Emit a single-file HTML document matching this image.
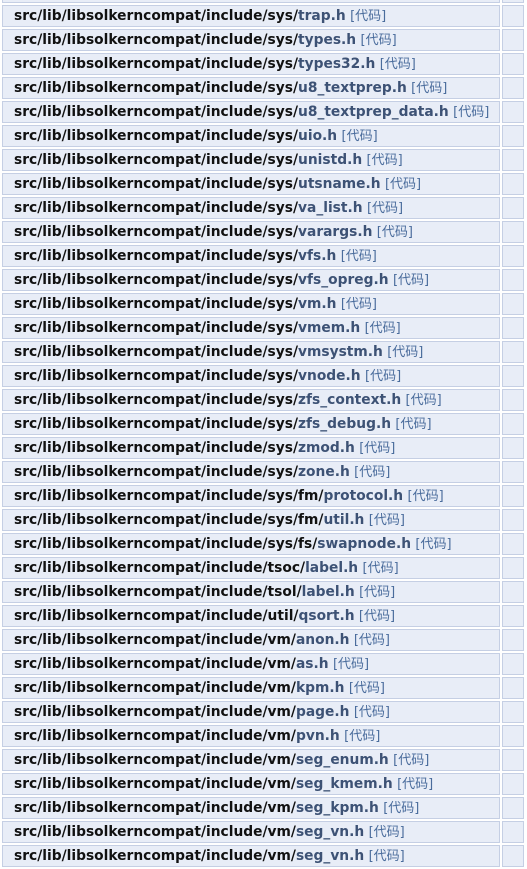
<!DOCTYPE html>
<html><head><meta charset="utf-8"><style>
body{margin:0;background:#fff;width:527px;height:846px;overflow:hidden;font-family:"DejaVu Sans","Liberation Sans","Noto Sans CJK SC",sans-serif;}
#w{position:absolute;left:2px;top:-19px;}
.r{display:flex;height:22px;margin-bottom:2px;}
.c{box-sizing:border-box;height:22px;background:#e8edf7;border:1px solid #c5cfe4;}
.a{width:498px;padding-left:11px;font-size:13.8px;line-height:20px;white-space:nowrap;overflow:hidden;}
.e{width:22px;margin-left:2px;}
b{color:#111;}
a{color:#3d5275;text-decoration:none;font-weight:bold;}
span{color:#4a6c9c;font-size:13px;}
</style></head><body><div id="w">
<div class="r"><div class="c a"><b>src/lib/libsolkerncompat/include/sys/</b><a>taskq.h</a> <span>[代码]</span></div><div class="c e"></div></div>
<div class="r"><div class="c a"><b>src/lib/libsolkerncompat/include/sys/</b><a>trap.h</a> <span>[代码]</span></div><div class="c e"></div></div>
<div class="r"><div class="c a"><b>src/lib/libsolkerncompat/include/sys/</b><a>types.h</a> <span>[代码]</span></div><div class="c e"></div></div>
<div class="r"><div class="c a"><b>src/lib/libsolkerncompat/include/sys/</b><a>types32.h</a> <span>[代码]</span></div><div class="c e"></div></div>
<div class="r"><div class="c a"><b>src/lib/libsolkerncompat/include/sys/</b><a>u8_textprep.h</a> <span>[代码]</span></div><div class="c e"></div></div>
<div class="r"><div class="c a"><b>src/lib/libsolkerncompat/include/sys/</b><a>u8_textprep_data.h</a> <span>[代码]</span></div><div class="c e"></div></div>
<div class="r"><div class="c a"><b>src/lib/libsolkerncompat/include/sys/</b><a>uio.h</a> <span>[代码]</span></div><div class="c e"></div></div>
<div class="r"><div class="c a"><b>src/lib/libsolkerncompat/include/sys/</b><a>unistd.h</a> <span>[代码]</span></div><div class="c e"></div></div>
<div class="r"><div class="c a"><b>src/lib/libsolkerncompat/include/sys/</b><a>utsname.h</a> <span>[代码]</span></div><div class="c e"></div></div>
<div class="r"><div class="c a"><b>src/lib/libsolkerncompat/include/sys/</b><a>va_list.h</a> <span>[代码]</span></div><div class="c e"></div></div>
<div class="r"><div class="c a"><b>src/lib/libsolkerncompat/include/sys/</b><a>varargs.h</a> <span>[代码]</span></div><div class="c e"></div></div>
<div class="r"><div class="c a"><b>src/lib/libsolkerncompat/include/sys/</b><a>vfs.h</a> <span>[代码]</span></div><div class="c e"></div></div>
<div class="r"><div class="c a"><b>src/lib/libsolkerncompat/include/sys/</b><a>vfs_opreg.h</a> <span>[代码]</span></div><div class="c e"></div></div>
<div class="r"><div class="c a"><b>src/lib/libsolkerncompat/include/sys/</b><a>vm.h</a> <span>[代码]</span></div><div class="c e"></div></div>
<div class="r"><div class="c a"><b>src/lib/libsolkerncompat/include/sys/</b><a>vmem.h</a> <span>[代码]</span></div><div class="c e"></div></div>
<div class="r"><div class="c a"><b>src/lib/libsolkerncompat/include/sys/</b><a>vmsystm.h</a> <span>[代码]</span></div><div class="c e"></div></div>
<div class="r"><div class="c a"><b>src/lib/libsolkerncompat/include/sys/</b><a>vnode.h</a> <span>[代码]</span></div><div class="c e"></div></div>
<div class="r"><div class="c a"><b>src/lib/libsolkerncompat/include/sys/</b><a>zfs_context.h</a> <span>[代码]</span></div><div class="c e"></div></div>
<div class="r"><div class="c a"><b>src/lib/libsolkerncompat/include/sys/</b><a>zfs_debug.h</a> <span>[代码]</span></div><div class="c e"></div></div>
<div class="r"><div class="c a"><b>src/lib/libsolkerncompat/include/sys/</b><a>zmod.h</a> <span>[代码]</span></div><div class="c e"></div></div>
<div class="r"><div class="c a"><b>src/lib/libsolkerncompat/include/sys/</b><a>zone.h</a> <span>[代码]</span></div><div class="c e"></div></div>
<div class="r"><div class="c a"><b>src/lib/libsolkerncompat/include/sys/fm/</b><a>protocol.h</a> <span>[代码]</span></div><div class="c e"></div></div>
<div class="r"><div class="c a"><b>src/lib/libsolkerncompat/include/sys/fm/</b><a>util.h</a> <span>[代码]</span></div><div class="c e"></div></div>
<div class="r"><div class="c a"><b>src/lib/libsolkerncompat/include/sys/fs/</b><a>swapnode.h</a> <span>[代码]</span></div><div class="c e"></div></div>
<div class="r"><div class="c a"><b>src/lib/libsolkerncompat/include/tsoc/</b><a>label.h</a> <span>[代码]</span></div><div class="c e"></div></div>
<div class="r"><div class="c a"><b>src/lib/libsolkerncompat/include/tsol/</b><a>label.h</a> <span>[代码]</span></div><div class="c e"></div></div>
<div class="r"><div class="c a"><b>src/lib/libsolkerncompat/include/util/</b><a>qsort.h</a> <span>[代码]</span></div><div class="c e"></div></div>
<div class="r"><div class="c a"><b>src/lib/libsolkerncompat/include/vm/</b><a>anon.h</a> <span>[代码]</span></div><div class="c e"></div></div>
<div class="r"><div class="c a"><b>src/lib/libsolkerncompat/include/vm/</b><a>as.h</a> <span>[代码]</span></div><div class="c e"></div></div>
<div class="r"><div class="c a"><b>src/lib/libsolkerncompat/include/vm/</b><a>kpm.h</a> <span>[代码]</span></div><div class="c e"></div></div>
<div class="r"><div class="c a"><b>src/lib/libsolkerncompat/include/vm/</b><a>page.h</a> <span>[代码]</span></div><div class="c e"></div></div>
<div class="r"><div class="c a"><b>src/lib/libsolkerncompat/include/vm/</b><a>pvn.h</a> <span>[代码]</span></div><div class="c e"></div></div>
<div class="r"><div class="c a"><b>src/lib/libsolkerncompat/include/vm/</b><a>seg_enum.h</a> <span>[代码]</span></div><div class="c e"></div></div>
<div class="r"><div class="c a"><b>src/lib/libsolkerncompat/include/vm/</b><a>seg_kmem.h</a> <span>[代码]</span></div><div class="c e"></div></div>
<div class="r"><div class="c a"><b>src/lib/libsolkerncompat/include/vm/</b><a>seg_kpm.h</a> <span>[代码]</span></div><div class="c e"></div></div>
<div class="r"><div class="c a"><b>src/lib/libsolkerncompat/include/vm/</b><a>seg_vn.h</a> <span>[代码]</span></div><div class="c e"></div></div>
<div class="r"><div class="c a"><b>src/lib/libsolkerncompat/include/vm/</b><a>seg_vn.h</a> <span>[代码]</span></div><div class="c e"></div></div>
</div></body></html>
